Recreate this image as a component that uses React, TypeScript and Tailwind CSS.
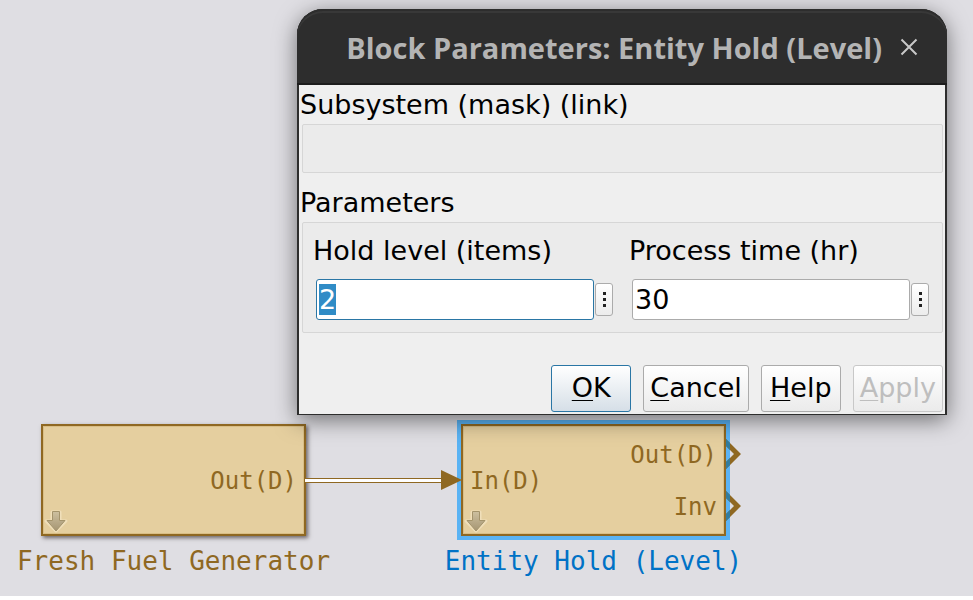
import { useEffect, useRef } from "react";
import type { ReactNode } from "react";

function LinkBadge() {
  return (
    <svg className="absolute bottom-0 left-0 h-7 w-7" viewBox="0 0 28 28" aria-hidden="true">
      <defs>
        <linearGradient id="badge" x1="0" y1="0" x2="0" y2="1">
          <stop offset="0" stopColor="#cdc0a0" />
          <stop offset="1" stopColor="#a59572" />
        </linearGradient>
      </defs>
      <path d="M9 6h8v9h6L13 25L3 15h6z" fill="none" stroke="#f0dfba" strokeWidth="3" strokeLinejoin="round" />
      <path d="M9.500 5.500h7v9h5.500L13 25L4 14.500h5.500z" fill="url(#badge)" stroke="#a4946c" />
    </svg>
  );
}

function OutPort({ className }: { className: string }) {
  return (
    <svg className={`absolute left-[263px] h-8 w-4 ${className}`} viewBox="0 0 16 32" aria-hidden="true">
      <path d="M0 1L15 16L0 31V24L8 16L0 8z" fill="#8f6822" />
      <path d="M0 1L4 5V12L0 8zM0 31L4 27V20L0 24z" fill="#317d9f" />
    </svg>
  );
}

type BlockProps = { name: string; selected?: boolean; className: string; children: ReactNode };

function Block({ name, selected, className, children }: BlockProps) {
  return (
    <figure className={`absolute top-[424px] flex w-[265px] flex-col items-center ${className}`}>
      <div
        className={`relative h-28 w-full border-2 border-[#8f6822] bg-[#e5cf9f] text-2xl text-[#8f6822] ${
          selected
            ? "shadow-[inset_0_0_0_1px_#d9be86,0_0_0_4px_#5ab3f4]"
            : "shadow-[inset_0_0_0_1px_#d9be86,2px_2px_4px_rgba(60,50,50,0.7)]"
        }`}
      >
        {children}
        <LinkBadge />
      </div>
      <figcaption
        className={`mt-[9px] text-[26px] leading-8 whitespace-nowrap ${selected ? "text-[#0072c6]" : "text-[#8f6822]"}`}
      >
        {name}
      </figcaption>
    </figure>
  );
}

function Diagram() {
  return (
    <div className="font-['DejaVu_Sans_Mono',monospace]">
      <Block name="Fresh Fuel Generator" className="left-[41px]">
        <div className="flex h-full items-center justify-end pt-px pr-[7px]">Out(D)</div>
      </Block>
      <Block name="Entity Hold (Level)" selected className="left-[461px]">
        <div className="flex h-full items-center justify-between px-[7px] pt-px">
          <span>In(D)</span>
          <div className="flex flex-col items-end gap-5 leading-8">
            <span>Out(D)</span>
            <span>Inv</span>
          </div>
        </div>
        <OutPort className="top-3" />
        <OutPort className="top-16" />
      </Block>
      <svg className="absolute top-[470px] left-[305px] h-5 w-[157px]" viewBox="0 0 157 20" aria-hidden="true">
        <path d="M0 8h137v5H0z" fill="#8f6822" />
        <path d="M0 9h137v3H0z" fill="#fff" />
        <path d="M136 0L157 10L136 20z" fill="#8f6822" />
      </svg>
    </div>
  );
}

type FieldProps = { id: string; label: string; value: string; focused?: boolean };

function Field({ id, label, value, focused }: FieldProps) {
  const ref = useRef<HTMLInputElement>(null);
  useEffect(() => {
    if (focused && ref.current) {
      ref.current.focus();
      ref.current.select();
    }
  }, [focused]);

  return (
    <div className="min-w-0">
      <label htmlFor={id} className="block leading-8">
        {label}
      </label>
      <div className="mt-3 flex items-center gap-px pl-[3px]">
        <input
          ref={ref}
          id={id}
          defaultValue={value}
          className="h-[41px] min-w-0 flex-1 rounded-[3px] border border-[#ababab] bg-white px-0.5 caret-transparent outline-none selection:bg-[#308cc6] selection:text-white focus:border-[#2a76a5]"
        />
        <button
          type="button"
          aria-label={`${label} options`}
          className="flex h-[33px] w-[18px] flex-col items-center justify-center gap-[3px] rounded-[3px] border border-[#ababab] bg-linear-to-b from-white to-[#ececec]"
        >
          <i className="h-[3px] w-[3px] bg-[#222]" />
          <i className="h-[3px] w-[3px] bg-[#222]" />
          <i className="h-[3px] w-[3px] bg-[#222]" />
        </button>
      </div>
    </div>
  );
}

const dialogButton =
  "h-[47px] min-w-20 rounded-[3px] border border-[#ababab] bg-linear-to-b from-white to-[#ebebeb] px-1.5 disabled:border-[#c8c8c8] disabled:text-[#bebebe]";

function Mnemonic({ text }: { text: string }) {
  return (
    <>
      <span className="underline decoration-1 underline-offset-3">{text[0]}</span>
      {text.slice(1)}
    </>
  );
}

function ParameterDialog() {
  return (
    <section
      role="dialog"
      aria-labelledby="dialog-title"
      className="absolute top-[9px] right-[26px] left-[297px] rounded-t-[26px] border-x-2 border-b border-[#2d2d2d] bg-[#efefef] font-['DejaVu_Sans',sans-serif] text-[27px] text-black shadow-[0_5px_22px_rgba(0,0,0,0.5)]"
    >
      <header className="-mx-0.5 flex h-[76px] items-center justify-end rounded-t-[26px] border-b-2 border-[#1c1c1c] bg-[#2d2d2d] pr-[29px] shadow-[inset_0_2px_0_#2d2d2d,inset_0_4px_0_#383838]">
        <h1
          id="dialog-title"
          className="mt-1 flex-1 text-right font-['Open_Sans',sans-serif] text-[29px] font-bold whitespace-nowrap text-[#b4b4b4]"
        >
          Block Parameters: Entity Hold (Level)
        </h1>
        <button type="button" aria-label="Close" className="mt-0.5 ml-[18px]">
          <svg className="h-[18px] w-[18px]" viewBox="0 0 18 18">
            <path d="M1.500 1.500L16.500 16.500M16.500 1.500L1.500 16.500" stroke="#c8c8c8" strokeWidth="2" />
          </svg>
        </button>
      </header>
      <div className="pr-0.5 pb-0.5 pl-px">
        <h2 className="leading-[39px]">Subsystem (mask) (link)</h2>
        <div className="ml-0.5 h-[49px] rounded-xs border border-[#d6d6d6] bg-[#ebebeb]" />
        <h2 className="mt-[10px] leading-[39px]">Parameters</h2>
        <div className="ml-0.5 grid grid-cols-2 gap-4 rounded-xs border border-[#d6d6d6] bg-[#ebebeb] pt-3 pr-[13px] pb-3 pl-[10px]">
          <Field id="hold-level" label="Hold level (items)" value="2" focused />
          <Field id="process-time" label="Process time (hr)" value="30" />
        </div>
        <footer className="mt-8 flex justify-end gap-3">
          <button
            type="button"
            className="h-[47px] min-w-20 rounded-[3px] border border-[#2a76a5] bg-linear-to-b from-white to-[#d6dfe7] px-1.5"
          >
            <Mnemonic text="OK" />
          </button>
          <button type="button" className={dialogButton}>
            <Mnemonic text="Cancel" />
          </button>
          <button type="button" className={dialogButton}>
            <Mnemonic text="Help" />
          </button>
          <button type="button" disabled className={dialogButton}>
            <Mnemonic text="Apply" />
          </button>
        </footer>
      </div>
    </section>
  );
}

export default function App() {
  return (
    <main className="h-screen bg-white pb-1">
      <div className="relative h-full overflow-hidden bg-[#dfdee3]">
        <Diagram />
        <ParameterDialog />
      </div>
    </main>
  );
}
